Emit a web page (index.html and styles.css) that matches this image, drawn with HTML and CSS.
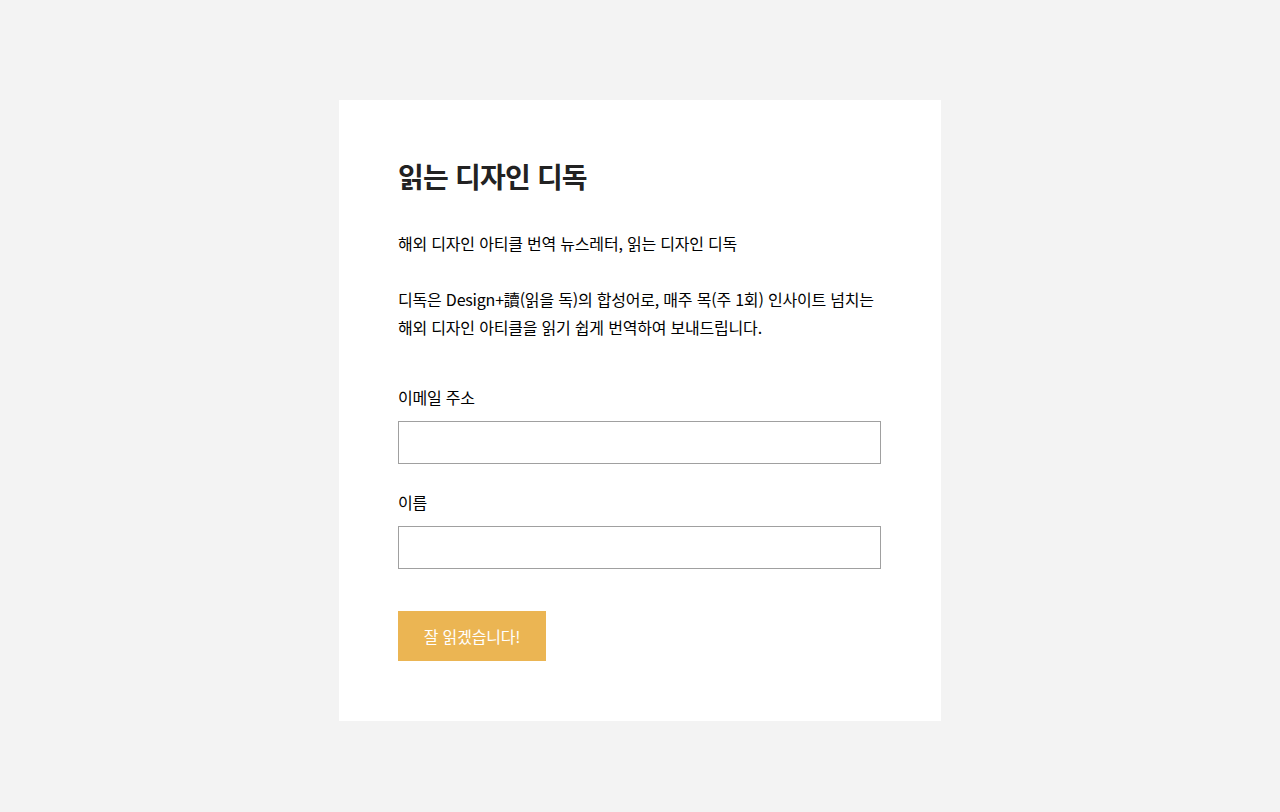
FILE: index.html
```html
<!DOCTYPE html>
<html lang="ko">
<head>
<meta charset="utf-8">
<link rel="stylesheet" href="styles.css">
</head>
<body>
<main class="page">
  <section class="card">
    <h1 class="title">읽는 디자인 디독</h1>
    <p class="lead">해외 디자인 아티클 번역 뉴스레터, 읽는 디자인 디독</p>
    <p class="desc">디독은 Design+讀(읽을 독)의 합성어로, 매주 목(주 1회) 인사이트 넘치는<br>해외 디자인 아티클을 읽기 쉽게 번역하여 보내드립니다.</p>
    <form class="form">
      <label class="field">
        <span class="label">이메일 주소</span>
        <input class="input" type="email">
      </label>
      <label class="field">
        <span class="label">이름</span>
        <input class="input" type="text">
      </label>
      <button class="btn" type="button">잘 읽겠습니다!</button>
    </form>
  </section>
</main>
</body>
</html>
```
FILE: styles.css
```css
html, body {
  margin: 0;
  padding: 0;
  background: #f3f3f3;
}
body {
  font-family: "Noto Sans CJK KR", "Noto Sans", sans-serif;
  color: #000;
}
.page {
  display: flex;
  justify-content: center;
  padding-top: 100px;
}
.card {
  width: 602px;
  box-sizing: border-box;
  background: #fff;
  padding: 56px 60px 60px 59px;
}
.title {
  margin: 0;
  font-size: 28px;
  line-height: 40px;
  font-weight: 700;
  color: #222;
  letter-spacing: -0.8px;
}
.lead {
  margin: 33px 0 0;
  font-size: 16px;
  line-height: 28px;
  letter-spacing: -0.2px;
}
.desc {
  margin: 28px 0 0;
  font-size: 16px;
  line-height: 28px;
  letter-spacing: -0.2px;
}
.form {
  display: flex;
  flex-direction: column;
  align-items: flex-start;
  margin-top: 45px;
}
.field {
  display: flex;
  flex-direction: column;
  width: 100%;
  margin-bottom: 27px;
}
.label {
  font-size: 16px;
  line-height: 22px;
  letter-spacing: -0.2px;
  margin-bottom: 13px;
}
.input {
  box-sizing: border-box;
  width: 100%;
  height: 43px;
  border: 1px solid #a0a0a0;
  border-radius: 0;
  background: #fff;
  margin: 0;
  padding: 0 10px;
  font: inherit;
}
.btn {
  margin-top: 15px;
  width: 148px;
  height: 50px;
  border: 0;
  background: #ebb553;
  color: #fff;
  font-family: inherit;
  font-size: 16px;
  letter-spacing: -0.2px;
  padding: 0;
  cursor: pointer;
}
```
